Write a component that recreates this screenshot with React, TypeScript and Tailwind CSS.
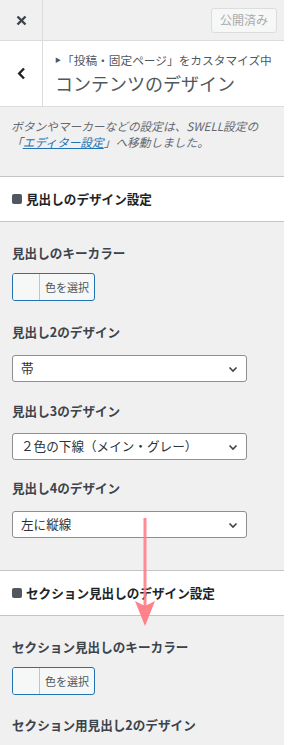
import type { ReactNode } from 'react'

const font = { fontFamily: '"Noto Sans CJK JP", "Noto Sans", sans-serif' }

function Label({ children }: { children: ReactNode }) {
  return <div className="h-[18px] text-[12.6px] font-bold leading-[18px] text-[#3c434a]">{children}</div>
}

function ColorButton() {
  return (
    <button
      type="button"
      className="flex h-[28px] w-[83px] items-stretch overflow-hidden rounded-[3px] border border-[#2271b1] bg-[#f6f7f7]"
    >
      <span className="w-[27px] border-r border-[#c3c4c7] bg-[#f6f7f7]" />
      <span className="flex flex-1 items-center justify-center text-[11px] text-[#50575e]">色を選択</span>
    </button>
  )
}

function Select({ value }: { value: string }) {
  return (
    <div className="flex h-[27px] w-[235px] items-center justify-between rounded-[3px] border border-[#8c8f94] bg-white pl-[8px] pr-[8px]">
      <span className="text-[12.6px] text-[#2c3338]">{value}</span>
      <svg width="10" height="10" viewBox="0 0 10 10" fill="none">
        <path d="M1.5 3.5 5 7l3.5-3.5" stroke="#3c434a" strokeWidth="1.6" />
      </svg>
    </div>
  )
}

function SectionTitle({ children }: { children: ReactNode }) {
  return (
    <div className="flex h-[45px] items-center gap-[4px] border-b border-[#c3c4c7] bg-white pl-[12px]">
      <span className="h-[10px] w-[10px] rounded-[2px] bg-[#50575e]" />
      <span className="text-[12.6px] font-bold text-[#1d2327]">{children}</span>
    </div>
  )
}

export default function App() {
  return (
    <div className="flex min-h-[745px] bg-white" style={font}>
      <div className="relative w-[284px] bg-[#f0f0f1]">
        <header className="flex h-[41px] items-center justify-between border-b border-[#dcdcde] bg-[#f0f0f1]">
          <div className="flex h-full w-[43px] items-center justify-center border-r border-[#dcdcde]">
            <svg width="11" height="11" viewBox="0 0 11 11">
              <path d="M1.5 1.5l8 8M9.5 1.5l-8 8" stroke="#3c434a" strokeWidth="2.4" />
            </svg>
          </div>
          <button
            type="button"
            className="mr-[7px] h-[25px] w-[66px] rounded-[3px] border border-[#dcdcde] bg-[#f6f7f7] text-[12px] text-[#a7aaad]"
          >
            公開済み
          </button>
        </header>

        <div className="flex h-[66px] border-b border-[#dcdcde] bg-white">
          <div className="flex w-[43px] items-center justify-center border-r border-[#dcdcde]">
            <svg width="9" height="13" viewBox="0 0 9 13">
              <path d="M7 1.5 2.2 6.5 7 11.5" stroke="#1d2327" strokeWidth="2.4" fill="none" />
            </svg>
          </div>
          <div className="flex flex-col justify-center pl-[12px]">
            <div className="flex items-center text-[11.7px] leading-[16px] text-[#50575e]">
              <span className="mr-[1px] text-[6px]">▶</span>「投稿・固定ページ」をカスタマイズ中
            </div>
            <div className="mt-[3px] text-[18px] leading-[24px] text-[#50575e]">コンテンツのデザイン</div>
          </div>
        </div>

        <div className="h-[70px] border-b border-[#c3c4c7] px-[11px] pt-[11px] text-[11.7px] leading-[15.5px] italic text-[#646970]">
          ボタンやマーカーなどの設定は、SWELL設定の
          <br />「<span className="text-[#2271b1] underline">エディター設定</span>」へ移動しました。
        </div>

        <SectionTitle>見出しのデザイン設定</SectionTitle>

        <div className="px-[12px] pt-[22px]">
          <Label>見出しのキーカラー</Label>
          <div className="mt-[11px]">
            <ColorButton />
          </div>
          <div className="mt-[22px]">
            <Label>見出し2のデザイン</Label>
          </div>
          <div className="mt-[14px]">
            <Select value="帯" />
          </div>
          <div className="mt-[20px]">
            <Label>見出し3のデザイン</Label>
          </div>
          <div className="mt-[13px]">
            <Select value="２色の下線（メイン・グレー）" />
          </div>
          <div className="mt-[19px]">
            <Label>見出し4のデザイン</Label>
          </div>
          <div className="mt-[14px]">
            <Select value="左に縦線" />
          </div>
        </div>

        <div className="mt-[32px] border-t border-[#c3c4c7]">
          <SectionTitle>セクション見出しのデザイン設定</SectionTitle>
        </div>

        <div className="px-[12px] pt-[22px]">
          <Label>セクション見出しのキーカラー</Label>
          <div className="mt-[11px]">
            <ColorButton />
          </div>
          <div className="mt-[21px]">
            <Label>セクション用見出し2のデザイン</Label>
          </div>
        </div>

        <svg
          className="pointer-events-none absolute left-[134px] top-[516px]"
          width="22"
          height="112"
          viewBox="0 0 22 112"
        >
          <line x1="11" y1="2" x2="11" y2="92" stroke="#ff7f8a" strokeWidth="3" opacity="0.9" />
          <path d="M1 85 L11 110 L21 85 L11 90 Z" fill="#ff7a85" opacity="0.95" />
        </svg>
      </div>
    </div>
  )
}
